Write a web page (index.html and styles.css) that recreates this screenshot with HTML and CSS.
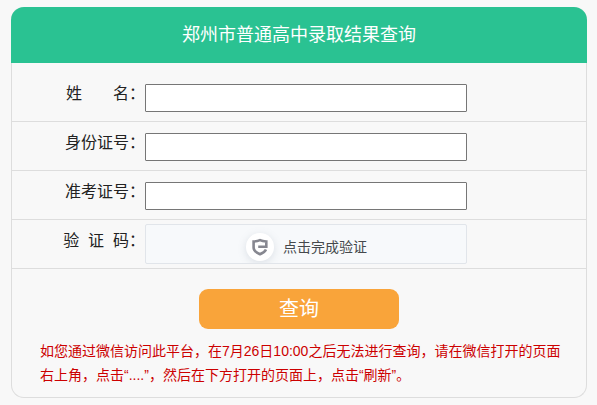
FILE: index.html
```html
<!DOCTYPE html>
<html lang="zh-CN">
<head>
    <meta charset="UTF-8">
    <meta name="viewport" content="width=device-width, initial-scale=1.0">
    <title>郑州市普通高中录取结果查询</title>
    <link rel="stylesheet" href="styles.css">
</head>
<body>
    <div class="container">
        <h1>郑州市普通高中录取结果查询</h1>
        <form id="queryForm">
            <div class="row">
                <label for="name">姓&nbsp;&nbsp;&nbsp;&nbsp;&nbsp;&nbsp;&nbsp;名：</label>
                <input type="text" id="name" name="name">
            </div>
            <div class="row">
                <label for="idCard">身份证号：</label>
                <input type="text" id="idCard" name="idCard">
            </div>
            <div class="row">
                <label for="examNo">准考证号：</label>
                <input type="text" id="examNo" name="examNo">
            </div>
            <div class="row captcha-row">
                <label>验&nbsp;&nbsp;证&nbsp;&nbsp;码：</label>
                <div class="captcha">
                    <span class="captcha-icon">
                        <svg width="16" height="18" viewBox="0 0 16 18" fill="none" stroke="#868790" stroke-width="2.6">
                            <path d="M6.200 8.700H14.300V3.500Q10.500 3.300 8 2.100Q5.500 3.300 1.600 3.500V9.500C1.600 12.700 4.500 14.700 8 16.200C10.800 15 13.200 13.300 14 11.400"/>
                        </svg>
                    </span>
                    <span class="captcha-text">点击完成验证</span>
                </div>
            </div>
            <button type="button">查询</button>
        </form>
        <p class="note">如您通过微信访问此平台，在7月26日10:00之后无法进行查询，请在微信打开的页面右上角，点击“....”，然后在下方打开的页面上，点击“刷新”。</p>
    </div>
</body>
</html>
```
FILE: styles.css
```css
* {
    box-sizing: border-box;
}
body {
    font-family: "Liberation Sans", "Noto Sans CJK SC", sans-serif;
    margin: 0;
    padding: 7px 10px 0 11px;
    background-color: #f8f8f8;
    color: #222;
}
.container {
    height: 391px;
    border: 1px solid #ddd;
    border-top: none;
    border-radius: 13px;
}
h1 {
    height: 56px;
    margin: 0 -1px 10px;
    border-radius: 13px 13px 0 0;
    background: #2ac292;
    color: #fff;
    font-size: 18px;
    font-weight: normal;
    line-height: 57px;
    text-align: center;
}
.row {
    display: flex;
    height: 49px;
    padding-top: 11px;
    border-bottom: 1px solid #ddd;
}
label {
    width: 133px;
    font-size: 16px;
    line-height: 20px;
    text-align: right;
    white-space: nowrap;
}
input {
    width: 322px;
    height: 28px;
    border: 1px solid #767676;
    border-radius: 1px;
    background: #fff;
}
.captcha-row {
    padding-top: 4px;
}
.captcha-row label {
    padding-top: 7px;
}
.captcha {
    display: flex;
    align-items: center;
    width: 322px;
    height: 40px;
    padding: 5px 0 0 100px;
    border: 1px solid #e1e5ea;
    border-radius: 2px;
    background: #f7f9fb;
    overflow: hidden;
}
.captcha-icon {
    display: flex;
    align-items: center;
    justify-content: center;
    width: 28px;
    height: 28px;
    margin-right: 9px;
    border-radius: 50%;
    background: #fff;
    box-shadow: 0 2px 8px rgba(110, 125, 145, 0.2);
}
.captcha-text {
    color: #45494c;
    font-size: 14px;
    line-height: 20px;
}
button {
    display: block;
    width: 200px;
    height: 40px;
    margin: 20px auto 0;
    padding: 0;
    border: none;
    border-radius: 9px;
    background: #f9a43a;
    color: #fff;
    font-family: inherit;
    font-size: 20px;
    line-height: 38px;
}
.note {
    margin: 10px 20px 0 28px;
    color: #c00;
    font-size: 14px;
    line-height: 24px;
}
```
